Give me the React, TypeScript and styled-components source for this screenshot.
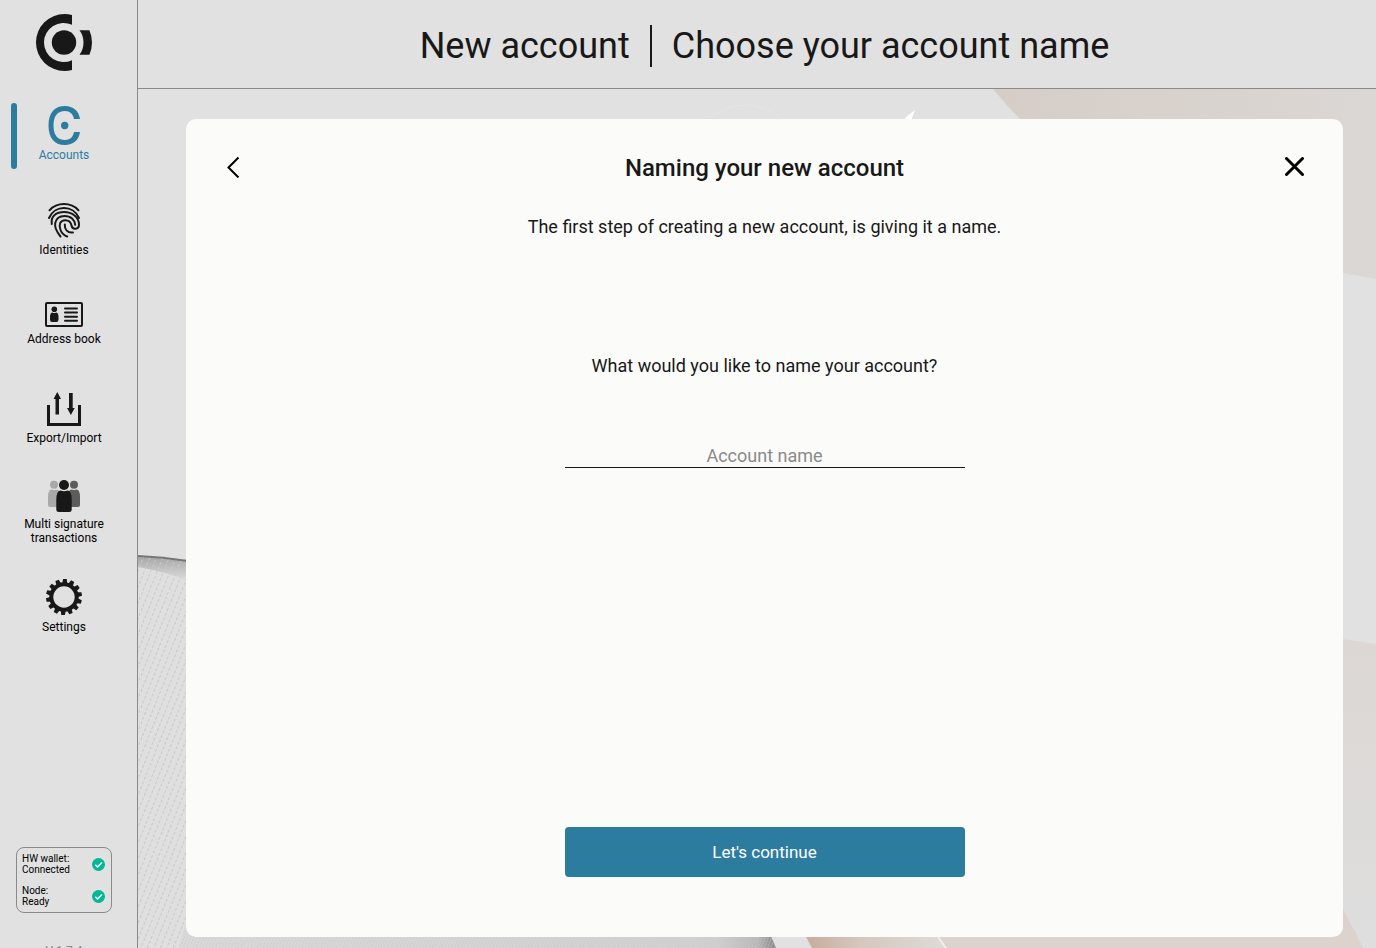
import React from 'react';
import styled, { createGlobalStyle } from 'styled-components';

const ink = '#181818';
const teal = '#2c7c9f';
const grey = '#e1e1e1';
const line = '#8a8a8a';

const GlobalStyle = createGlobalStyle`
  *, *::before, *::after { box-sizing: border-box; }
  body {
    margin: 0;
    color: ${ink};
    background: ${grey};
    font-family: Roboto, 'Liberation Sans', sans-serif;
  }
  h1, h2, p { margin: 0; font-weight: 400; }
  button, input { font: inherit; color: inherit; }
`;

const Shell = styled.div`
  display: flex;
  height: 100vh;
  overflow: hidden;
`;

const Sidebar = styled.aside`
  flex: 0 0 138px;
  display: flex;
  flex-direction: column;
  padding: 14px 9px 0 0;
  border-right: 1px solid ${line};
  background: ${grey};
  overflow: hidden;
`;

const LogoBox = styled.div`
  display: flex;
  justify-content: center;
  height: 57px;
  flex: none;
`;

const Nav = styled.nav`
  display: flex;
  flex-direction: column;
  margin-top: 32px;
`;

const NavLink = styled.a<{ $active?: boolean; $height: number }>`
  position: relative;
  display: flex;
  flex-direction: column;
  align-items: center;
  justify-content: flex-end;
  gap: ${(p) => (p.$active ? 3 : 5)}px;
  height: ${(p) => p.$height}px;
  color: ${(p) => (p.$active ? teal : '#000')};
  font-size: 12px;
  line-height: 14px;
  text-align: center;
  text-decoration: none;

  &::before {
    content: '';
    display: ${(p) => (p.$active ? 'block' : 'none')};
    position: absolute;
    left: 11px;
    bottom: -7px;
    width: 6px;
    height: 66px;
    border-radius: 3px;
    background: ${teal};
  }
`;

const NavLabel = styled.span`
  max-width: 96px;
`;

const Status = styled.section`
  display: flex;
  flex-direction: column;
  flex: none;
  gap: 10px;
  margin: auto 16px 0;
  padding: 5px 6px 5px 5px;
  border: 1px solid ${line};
  border-radius: 8px;
`;

const StatusRow = styled.div`
  display: flex;
  align-items: center;
  justify-content: space-between;
  color: #000;
  font-size: 10px;
  line-height: 11px;
`;

const Version = styled.p`
  flex: none;
  height: 35px;
  padding-top: 30px;
  color: ${line};
  font-size: 12px;
  line-height: 16px;
  text-align: center;
`;

const Main = styled.main`
  flex: 1;
  display: flex;
  flex-direction: column;
  min-width: 0;
`;

const Header = styled.header`
  display: flex;
  align-items: center;
  justify-content: center;
  flex: none;
  height: 89px;
  padding: 4px 0 0 15px;
  border-bottom: 1px solid ${line};
  font-size: 36px;
  line-height: 42px;
`;

const HeaderTitle = styled.h1`
  font-size: 36px;
  padding-right: 20px;
  border-right: 2px solid ${ink};
`;

const HeaderStep = styled.span`
  padding-left: 20px;
`;

const Stage = styled.div`
  position: relative;
  flex: 1;
  display: flex;
  min-height: 0;
  padding: 30px 33px 11px 48px;
`;

const Backdrop = styled.svg`
  position: absolute;
  inset: 0;
  width: 100%;
  height: 100%;
`;

const Card = styled.section`
  position: relative;
  flex: 1;
  display: flex;
  flex-direction: column;
  align-items: center;
  padding: 32px 32px 60px;
  border-radius: 10px;
  background: #fbfbf9;
  font-size: 18px;
  line-height: 24px;
`;

const CardHead = styled.div`
  align-self: stretch;
  display: flex;
  align-items: center;
  justify-content: space-between;
  height: 32px;
`;

const CardTitle = styled.h2`
  padding-top: 2px;
  font-size: 24px;
  font-weight: 500;
  line-height: 32px;
`;

const IconButton = styled.button`
  display: flex;
  align-items: center;
  justify-content: center;
  width: 32px;
  height: 32px;
  padding: 0;
  border: 0;
  background: none;
  color: #000;
`;

const Intro = styled.p`
  margin-top: 32px;
`;

const NameForm = styled.form`
  flex: 1;
  display: flex;
  flex-direction: column;
  align-items: center;
  width: 400px;
  max-width: 100%;
  padding-top: 115px;
`;

const NameInput = styled.input`
  width: 100%;
  height: 26px;
  margin-top: 64px;
  padding: 2px 0 0;
  border: 0;
  border-bottom: 1px solid ${ink};
  border-radius: 0;
  background: none;
  text-align: center;
  outline: none;

  &::placeholder {
    color: #8a8a8a;
    opacity: 1;
  }
`;

const Continue = styled.button`
  width: 100%;
  height: 50px;
  margin-top: auto;
  border: 0;
  border-radius: 4px;
  background: ${teal};
  color: #fff;
  font-size: 17px;
`;

const Logo = () => (
  <svg width="57" height="57" viewBox="0 0 57 57" fill={ink} role="img" aria-label="Concordium">
    <path d="M36 1A28.500 28.500 0 0 0 28.500 0A28.500 28.500 0 0 0 28.500 57A28.500 28.500 0 0 0 36 56V46.200A19.600 19.600 0 1 1 36 10.800Z" />
    <circle cx="28" cy="28.500" r="12.200" />
    <path d="M43.500 16.200H53.400Q56 22 56 28.500T53.400 40.800H43.500Q47.500 35.500 47.500 28.500T43.500 16.200Z" />
  </svg>
);

const AccountsIcon = () => (
  <svg width="33" height="39" viewBox="0 0 33 39" fill={teal}>
    <path d="M32 13H26C25 8 22 5 17 5C9.500 5 5.500 10 5.500 19.500S9.500 34 17 34C22 34 25 31 26 26H32C31 34 25 39 17 39C6 39 .5 31.500 .5 19.500S6 0 17 0C25 0 31 5 32 13Z" />
    <circle cx="16.700" cy="19.500" r="3.700" />
  </svg>
);

const FingerprintIcon = () => (
  <svg width="32" height="35" viewBox="0 0 32 35" fill="none" stroke={ink} strokeWidth="2" strokeLinecap="round">
    <path d="M1.500 7.300C9 -1 23 -1 30.500 7.300" />
    <path d="M1 15C6.500 1.700 25.500 1.700 31 15" />
    <path d="M3.800 21C2.500 13 8.500 9 16 9C24 9 31 14 31 21.500C31 26.500 24.500 27.500 23.500 22.500C22.800 18.700 20.800 17.200 17.200 17.200C12 17.200 10.500 22 12.500 27C14 31 16.500 32.500 19.200 33.500" />
    <path d="M12.500 33.500C8 28 6.500 24 7.200 20C8.200 15.500 12 13 16.500 13C23 13 26.700 17 27.200 21.800" />
    <path d="M16.800 21.500C16.500 26.500 19.500 30.200 25 29.500" />
  </svg>
);

const AddressIcon = () => (
  <svg width="38" height="25" viewBox="0 0 38 25" fill={ink}>
    <rect x="1" y="1" width="36" height="23" rx="1" fill="none" stroke={ink} strokeWidth="2" />
    <circle cx="9.300" cy="7.300" r="2.800" />
    <path d="M5 15Q5 10.500 7.500 10.500Q9.300 11.500 11 10.500Q13.500 10.500 13.500 15V17.500Q13.500 20 11.500 20H7Q5 20 5 17.500Z" />
    <path d="M20 6.500H32M20 10.600H32M20 14.700H32M20 18.700H32" stroke={ink} strokeWidth="2" strokeLinecap="round" />
  </svg>
);

const ExportIcon = () => (
  <svg width="34" height="34" viewBox="0 0 34 34" fill={ink}>
    <path d="M0 13H3V31H31V13H34V34H0Z" />
    <path d="M8.500 22.500V7H6.500L10.300 0L14 7H12V22.500ZM22 1H25.700V16H27.700L23.900 23L20 16H22Z" />
  </svg>
);

const PeopleIcon = () => (
  <svg width="32" height="32" viewBox="0 0 32 32">
    <g fill="#a9a9a9">
      <circle cx="6" cy="4.700" r="4" />
      <path d="M0 17Q0 9 4 9.500Q6 10.500 8 9.500Q12 9 12 17V27H2Q0 27 0 25Z" />
    </g>
    <g fill="#5c5c5a">
      <circle cx="26" cy="4.700" r="4" />
      <path d="M20 17Q20 9 24 9.500Q26 10.500 28 9.500Q32 9 32 17V25Q32 27 30 27H20Z" />
    </g>
    <circle cx="16" cy="5" r="5" fill={ink} />
    <path d="M8.300 20Q8.300 10.500 12.500 10.500Q16 12 19.500 10.500Q23.700 10.500 23.700 20V29.500Q23.700 32 21 32H11Q8.300 32 8.300 29.500Z" fill={ink} />
  </svg>
);

const teeth = Array.from({ length: 14 }, (_, i) => (i * 360) / 14 + 3);

const GearIcon = () => (
  <svg width="36" height="36" viewBox="-18 -18 36 36" fill={ink}>
    <circle r="12.700" fill="none" stroke={ink} strokeWidth="4" />
    {teeth.map((a) => (
      <path key={a} d="M-2.600 -13L-1.800 -18H1.800L2.600 -13Z" transform={`rotate(${a})`} />
    ))}
  </svg>
);

const CheckIcon = () => (
  <svg width="13" height="13" viewBox="0 0 13 13" fill="none">
    <circle cx="6.500" cy="6.500" r="6.500" fill="#00b894" />
    <path d="M3.300 6.700L5.600 9L9.900 4.500" stroke="#fff" strokeWidth="1.500" />
  </svg>
);

const Scenery = () => (
  <Backdrop viewBox="0 0 1238 859" preserveAspectRatio="none" aria-hidden="true">
    <defs>
      <linearGradient id="sand" x1="0" x2="1" y1="0" y2="0">
        <stop offset="0" stopColor="#d6cdc7" />
        <stop offset="1" stopColor="#dbd7d4" />
      </linearGradient>
      <linearGradient id="mist" x1="0" x2="0" y1="0" y2="1">
        <stop offset="0" stopColor="#dcd7d4" />
        <stop offset="1" stopColor="#dedede" />
      </linearGradient>
      <linearGradient id="copper" x1="0" x2="1" y1="0" y2="0">
        <stop offset="0" stopColor="#c4aa98" />
        <stop offset="0.400" stopColor="#d5c8be" />
        <stop offset="1" stopColor="#dedbd7" />
      </linearGradient>
      <linearGradient id="edge" x1="0" x2="1" y1="0" y2="0">
        <stop offset="0" stopColor="#d9d9d9" />
        <stop offset="0.900" stopColor="#d0d0d0" />
        <stop offset="0.970" stopColor="#b8b8b8" />
        <stop offset="1" stopColor="#868686" />
      </linearGradient>
      <linearGradient id="shade" x1="0" x2="0" y1="0" y2="1">
        <stop offset="0" stopColor="#a4a4a4" />
        <stop offset="1" stopColor="#dfdfdf" />
      </linearGradient>
      <pattern id="dots" width="6" height="5" patternUnits="userSpaceOnUse" patternTransform="rotate(22)">
        <rect width="1" height="3" fill="#c9c9c9" />
      </pattern>
      <pattern id="weave" width="3" height="3" patternUnits="userSpaceOnUse" patternTransform="rotate(20)">
        <rect width="1" height="2" fill="#c8c8c8" />
      </pattern>
    </defs>
    <path d="M855 0H1238V190L1205 184Q950 120 855 0Z" fill="url(#sand)" />
    <path d="M1205 550L1238 555V859H1205Z" fill="url(#mist)" />
    <path d="M1205 820L1225 859H1205Z" fill="#ddd1cb" />
    <circle cx="607" cy="70" r="54" fill="none" stroke="#e6e6e6" strokeWidth="1" />
    <path d="M762 34Q770 26 777 21L772 34Z" fill="#fff" />
    <path d="M0 467L50 472V859H0Z" fill="#dfdfdf" />
    <path d="M0 467L50 472V492Q25 482 0 478Z" fill="url(#shade)" />
    <path d="M0 467L50 472V859H0Z" fill="url(#dots)" />
    <path d="M0 467Q25 468 50 472" fill="none" stroke="#777" strokeWidth="2" />
    <path d="M48 835L630 840L638 859H40Z" fill="url(#edge)" />
    <path d="M48 835L630 840L638 859H40Z" fill="url(#weave)" opacity="0.600" />
    <path d="M664 840H800L808 859H674Z" fill="url(#copper)" />
    <path d="M796 840H1216L1225 859H808Z" fill="#ddd3ce" />
    <path d="M798 845L808 859" stroke="#f1eeeb" strokeWidth="2" />
  </Backdrop>
);

export default function App() {
  return (
    <Shell>
      <GlobalStyle />
      <Sidebar>
        <LogoBox><Logo /></LogoBox>
        <Nav>
          <NavLink href="#accounts" $active $height={59}><AccountsIcon /><NavLabel>Accounts</NavLabel></NavLink>
          <NavLink href="#identities" $height={95}><FingerprintIcon /><NavLabel>Identities</NavLabel></NavLink>
          <NavLink href="#address-book" $height={89}><AddressIcon /><NavLabel>Address book</NavLabel></NavLink>
          <NavLink href="#export" $height={99}><ExportIcon /><NavLabel>Export/Import</NavLabel></NavLink>
          <NavLink href="#multisig" $height={100}><PeopleIcon /><NavLabel>Multi signature transactions</NavLabel></NavLink>
          <NavLink href="#settings" $height={89}><GearIcon /><NavLabel>Settings</NavLabel></NavLink>
        </Nav>
        <Status>
          <StatusRow><span>HW wallet:<br />Connected</span><CheckIcon /></StatusRow>
          <StatusRow><span>Node:<br />Ready</span><CheckIcon /></StatusRow>
        </Status>
        <Version>V 1.7.4</Version>
      </Sidebar>
      <Main>
        <Header>
          <HeaderTitle>New account</HeaderTitle>
          <HeaderStep>Choose your account name</HeaderStep>
        </Header>
        <Stage>
          <Scenery />
          <Card>
            <CardHead>
              <IconButton type="button" aria-label="Back">
                <svg width="16" height="22" viewBox="0 0 16 22" fill="none" stroke="currentColor" strokeWidth="2">
                  <path d="M12.500 1.500L2.500 11.500L12.500 21.500" />
                </svg>
              </IconButton>
              <CardTitle>Naming your new account</CardTitle>
              <IconButton type="button" aria-label="Close">
                <svg width="20" height="20" viewBox="0 0 20 20" fill="none" stroke="currentColor" strokeWidth="3" strokeLinecap="round">
                  <path d="M1.500 1.500L17.500 17.500M17.500 1.500L1.500 17.500" />
                </svg>
              </IconButton>
            </CardHead>
            <Intro>The first step of creating a new account, is giving it a name.</Intro>
            <NameForm onSubmit={(e) => e.preventDefault()}>
              <label htmlFor="account-name">What would you like to name your account?</label>
              <NameInput id="account-name" type="text" placeholder="Account name" />
              <Continue type="submit">Let's continue</Continue>
            </NameForm>
          </Card>
        </Stage>
      </Main>
    </Shell>
  );
}
